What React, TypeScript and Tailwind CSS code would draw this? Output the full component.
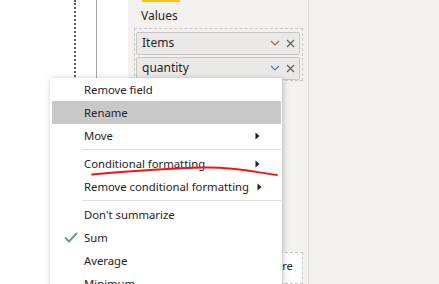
const menuItems = [
  { label: 'Remove field' },
  { label: 'Rename', active: true },
  { label: 'Move', submenu: true },
  { separator: true },
  { label: 'Conditional formatting', submenu: true },
  { label: 'Remove conditional formatting', submenu: true, arrowNear: true },
  { separator: true },
  { label: "Don't summarize" },
  { label: 'Sum', checked: true },
  { label: 'Average' },
  { label: 'Minimum' },
];

const fields = [
  { name: 'Items', chevron: '#a86a48' },
  { name: 'quantity', chevron: '#4f7cae' },
];

function Chevron({ color }: { color: string }) {
  return (
    <svg width="10" height="6" viewBox="0 0 10 6" className="block">
      <path d="M1 1 L5 5 L9 1" fill="none" stroke={color} strokeWidth="1.2" />
    </svg>
  );
}

function Close() {
  return (
    <svg width="9" height="9" viewBox="0 0 9 9" className="block">
      <path d="M1 1 L8 8 M8 1 L1 8" fill="none" stroke="#605e5c" strokeWidth="1.2" />
    </svg>
  );
}

function Arrow() {
  return (
    <svg width="5" height="8" viewBox="0 0 5 8" className="block">
      <path d="M0.5 0.5 L4.5 4 L0.5 7.5 Z" fill="#201f1e" />
    </svg>
  );
}

function Check() {
  return (
    <svg width="14" height="11" viewBox="0 0 14 11" className="block">
      <path d="M1 5.5 L5 9.5 L13 1" fill="none" stroke="#6a9c8c" strokeWidth="2" />
    </svg>
  );
}

export default function App() {
  return (
    <div className="relative w-[439px] h-[284px] overflow-hidden bg-white flex font-['Segoe_UI','Noto_Sans',sans-serif] text-[11.3px] text-[#252423]">
      {/* canvas edge */}
      <div className="w-[128px] h-full flex">
        <div className="ml-[74px] h-full border-l-2 border-dotted border-[#605e5c]" />
        <div className="ml-[20px] h-full w-px bg-[#a8a6a4]" />
      </div>

      {/* fields pane */}
      <div className="w-[181px] h-full bg-[#f3f2f1] border-r border-[#e1dfdd] flex flex-col">
        <div className="ml-[14px] w-[38px] h-[2px] bg-[#f2c811]" />
        <div className="ml-[13px] mt-[6px] h-[16px] leading-[16px] text-[12px]">Values</div>
        <div className="ml-[6px] mt-[4px] w-[169px] h-[62px] border border-dashed border-[#c8c6c4] px-px pt-[3px] flex flex-col gap-[2px]">
          {fields.map((f) => (
            <div
              key={f.name}
              className="h-[23px] w-[164px] rounded-[2px] border border-[#c8c6c4] bg-[#eae9e8] flex items-center pl-[5px] pr-[4px] text-[12px]"
            >
              <span className="flex-1 leading-none">{f.name}</span>
              <span className="mr-[6px]">
                <Chevron color={f.chevron} />
              </span>
              <Close />
            </div>
          ))}
        </div>
        <div className="ml-[6px] mt-[171px] w-[169px] h-[40px] border border-dashed border-[#c8c6c4] bg-white flex justify-end pr-[9px] pt-[5px]">
          <span>Drag data fields here</span>
        </div>
      </div>

      <div className="flex-1 h-full bg-[#f3f2f1]" />

      {/* context menu */}
      <div className="absolute left-[50px] top-[78px] w-[232px] bg-white shadow-[1px_1px_6px_rgba(0,0,0,0.25)] flex flex-col">
        {menuItems.map((item, i) =>
          item.separator ? (
            <div key={i} className="h-[5px] pt-[2px]">
              <div className="ml-[32px] mr-px h-px bg-[#e1dfdd]" />
            </div>
          ) : (
            <div
              key={i}
              className={`h-[23px] flex items-center ml-[2px] mr-px ${item.active ? 'bg-[#c8c8c8]' : ''}`}
            >
              <div className="w-[32px] flex justify-center pl-[6px]">{item.checked && <Check />}</div>
              <span className="leading-none">{item.label}</span>
              {item.submenu && (
                <span className={item.arrowNear ? 'ml-[8px]' : 'ml-auto mr-[21px]'}>
                  <Arrow />
                </span>
              )}
            </div>
          )
        )}
      </div>

      {/* annotation */}
      <svg className="absolute left-0 top-0 pointer-events-none" width="439" height="284">
        <path
          d="M92 174.5 C 120 172, 160 168.5, 205 167.5 C 235 167, 255 172, 277 175"
          fill="none"
          stroke="#ff1010"
          strokeWidth="1.8"
          strokeLinecap="round"
        />
      </svg>
    </div>
  );
}
